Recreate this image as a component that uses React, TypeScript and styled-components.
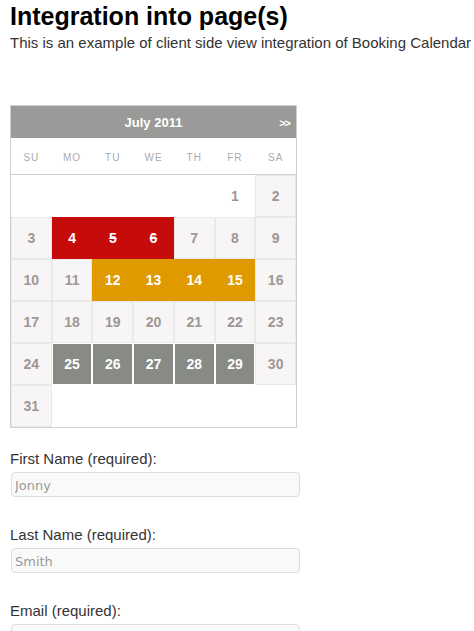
import React from "react";
import styled, { createGlobalStyle } from "styled-components";

const Global = createGlobalStyle`
  html, body { margin: 0; padding: 0; background: #fff; }
  body { font-family: "Liberation Sans", Arial, sans-serif; color: #333; }
`;

const Page = styled.div`
  padding: 2px 10px 0 10px;
`;

const Title = styled.h1`
  margin: 0;
  font-size: 25px;
  font-weight: bold;
  color: #000;
  line-height: 28px;
`;

const Lead = styled.p`
  margin: 4px 0 0 0;
  font-size: 15px;
  line-height: 18px;
  color: #333;
  white-space: nowrap;
`;

const Calendar = styled.div`
  margin-top: 53px;
  width: 285px;
  border: 1px solid #cfcfcf;
  background: #fff;
`;

const Header = styled.div`
  height: 32px;
  background: #9a9b98;
  display: flex;
  align-items: center;
  justify-content: center;
  position: relative;
  color: #fff;
  font-weight: bold;
  font-size: 13px;
`;

const NextLink = styled.span`
  position: absolute;
  right: 6px;
  top: 11px;
  font-size: 11px;
  font-weight: bold;
  letter-spacing: -1px;
`;

const DayNames = styled.div`
  display: grid;
  grid-template-columns: repeat(7, 1fr);
  height: 36px;
  border-bottom: 1px solid #cfcfcf;
  align-items: center;
`;

const DayName = styled.div`
  text-align: center;
  font-size: 10px;
  letter-spacing: 1px;
  color: #aaa;
  padding-top: 2px;
`;

const Grid = styled.div`
  display: grid;
  grid-template-columns: repeat(7, 1fr);
  grid-auto-rows: 42px;
`;

type Kind = "empty" | "blank" | "free" | "red" | "orange" | "gray";

const bg: Record<Kind, string> = {
  empty: "#fff",
  blank: "#fff",
  free: "#f7f5f5",
  red: "#c60b0b",
  orange: "#df9a00",
  gray: "#888a86",
};

const edge: Record<Kind, string> = {
  empty: "#fff",
  blank: "#fff",
  free: "#ebe9e5",
  red: "#c60b0b",
  orange: "#df9a00",
  gray: "#fff",
};

const Cell = styled.div<{ $kind: Kind; $strike?: boolean }>`
  display: flex;
  align-items: center;
  justify-content: center;
  font-size: 14px;
  font-weight: bold;
  color: ${(p) => (p.$kind === "red" || p.$kind === "orange" || p.$kind === "gray" ? "#fff" : "#9d9894")};
  background: ${(p) => bg[p.$kind]};
  border: 1px solid ${(p) => edge[p.$kind]};
  text-decoration: ${(p) => (p.$strike ? "line-through" : "none")};
`;

const Form = styled.div`
  margin-top: 22px;
  display: flex;
  flex-direction: column;
  gap: 29px;
`;

const Field = styled.div`
  display: flex;
  flex-direction: column;
  gap: 5px;
`;

const Label = styled.label`
  font-size: 15px;
  line-height: 17px;
  color: #333;
`;

const Input = styled.input`
  box-sizing: border-box;
  width: 289px;
  height: 25px;
  margin-left: 1px;
  border: 1px solid #dedede;
  border-radius: 4px;
  background: #f9f9f9;
  padding: 2px 3px 0;
  font-family: "DejaVu Sans", Verdana, sans-serif;
  font-size: 13px;
  color: #333;
  outline: none;
  &::placeholder { color: #9a9a9a; }
`;

const days: { d?: number; k: Kind; s?: boolean }[] = [
  { k: "empty" }, { k: "empty" }, { k: "empty" }, { k: "empty" }, { k: "empty" },
  { d: 1, k: "blank" }, { d: 2, k: "free" },
  { d: 3, k: "free" }, { d: 4, k: "red" }, { d: 5, k: "red", s: true }, { d: 6, k: "red", s: true },
  { d: 7, k: "free" }, { d: 8, k: "free" }, { d: 9, k: "free" },
  { d: 10, k: "free" }, { d: 11, k: "free" }, { d: 12, k: "orange" }, { d: 13, k: "orange" },
  { d: 14, k: "orange" }, { d: 15, k: "orange" }, { d: 16, k: "free" },
  { d: 17, k: "free" }, { d: 18, k: "free" }, { d: 19, k: "free" }, { d: 20, k: "free" },
  { d: 21, k: "free" }, { d: 22, k: "free" }, { d: 23, k: "free" },
  { d: 24, k: "free" }, { d: 25, k: "gray" }, { d: 26, k: "gray" }, { d: 27, k: "gray" },
  { d: 28, k: "gray" }, { d: 29, k: "gray" }, { d: 30, k: "free" },
  { d: 31, k: "free" },
];

export default function App() {
  return (
    <>
      <Global />
      <Page>
        <Title>Integration into page(s)</Title>
        <Lead>This is an example of client side view integration of Booking Calendar</Lead>
        <Calendar>
          <Header>
            July 2011
            <NextLink>&gt;&gt;</NextLink>
          </Header>
          <DayNames>
            {["SU", "MO", "TU", "WE", "TH", "FR", "SA"].map((n) => (
              <DayName key={n}>{n}</DayName>
            ))}
          </DayNames>
          <Grid>
            {days.map((c, i) => (
              <Cell key={i} $kind={c.k} $strike={c.s}>
                {c.d ?? ""}
              </Cell>
            ))}
          </Grid>
        </Calendar>
        <Form>
          <Field>
            <Label>First Name (required):</Label>
            <Input placeholder="Jonny" />
          </Field>
          <Field>
            <Label>Last Name (required):</Label>
            <Input placeholder="Smith" />
          </Field>
          <Field>
            <Label>Email (required):</Label>
            <Input />
          </Field>
        </Form>
      </Page>
    </>
  );
}
